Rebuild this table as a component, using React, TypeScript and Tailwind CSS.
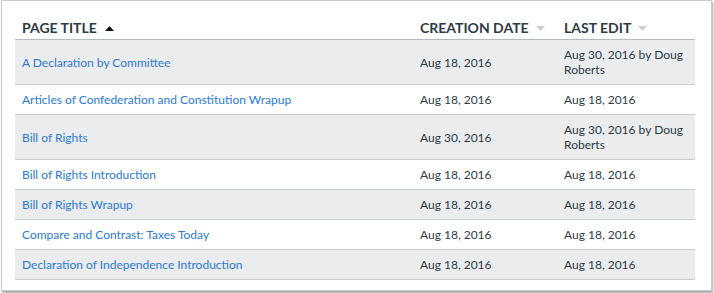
const rows = [
  { title: 'A Declaration by Committee', created: 'Aug 18, 2016', edited: 'Aug 30, 2016 by Doug Roberts' },
  { title: 'Articles of Confederation and Constitution Wrapup', created: 'Aug 18, 2016', edited: 'Aug 18, 2016' },
  { title: 'Bill of Rights', created: 'Aug 30, 2016', edited: 'Aug 30, 2016 by Doug Roberts' },
  { title: 'Bill of Rights Introduction', created: 'Aug 18, 2016', edited: 'Aug 18, 2016' },
  { title: 'Bill of Rights Wrapup', created: 'Aug 18, 2016', edited: 'Aug 18, 2016' },
  { title: 'Compare and Contrast: Taxes Today', created: 'Aug 18, 2016', edited: 'Aug 18, 2016' },
  { title: 'Declaration of Independence Introduction', created: 'Aug 18, 2016', edited: 'Aug 18, 2016' },
]

const Arrow = ({ up, active }: { up?: boolean; active?: boolean }) => (
  <svg width="9" height="5" viewBox="0 0 9 5" className={active ? 'text-[#111]' : 'text-[#c7cdd1]'}>
    {up ? <path d="M0 5 L4.5 0 L9 5 Z" fill="currentColor" /> : <path d="M0 0 L4.5 5 L9 0 Z" fill="currentColor" />}
  </svg>
)

export default function App() {
  return (
    <div className="w-[714px] h-[293px] bg-white font-['Lato',sans-serif]">
      <div className="ml-[1px] w-[711px] border border-[#c9c9c9] shadow-[1px_2px_2px_rgba(0,0,0,0.35)] pl-[13px] pr-[16px] pt-[16px] pb-[10px]">
        {/* encabezado de la tabla */}
        <div className="flex items-center h-[23px] border-b border-[#b4bac0] text-[14px] font-bold text-[#2d3b45] leading-[18px]">
          <div className="w-[398px] pl-[7px] flex items-center gap-[8px]">
            PAGE TITLE <Arrow up active />
          </div>
          <div className="w-[144px] pl-[7px] flex items-center gap-[7px]">
            CREATION DATE <Arrow />
          </div>
          <div className="flex-1 pl-[7px] flex items-center gap-[7px]">
            LAST EDIT <Arrow />
          </div>
        </div>

        {rows.map((row, i) => (
          <div
            key={row.title}
            className={`flex items-center py-[7px] border-b border-[#c7cdd1] text-[12px] leading-[15px] ${i % 2 === 0 ? 'bg-[#ebeced]' : 'bg-white'}`}
          >
            <div className="w-[398px] pl-[7px] text-[#2b7ad6]">{row.title}</div>
            <div className="w-[144px] pl-[7px] text-[#2d3b45]">{row.created}</div>
            <div className="flex-1 pl-[7px] pr-[8px] text-[#2d3b45]">{row.edited}</div>
          </div>
        ))}
      </div>
    </div>
  )
}
